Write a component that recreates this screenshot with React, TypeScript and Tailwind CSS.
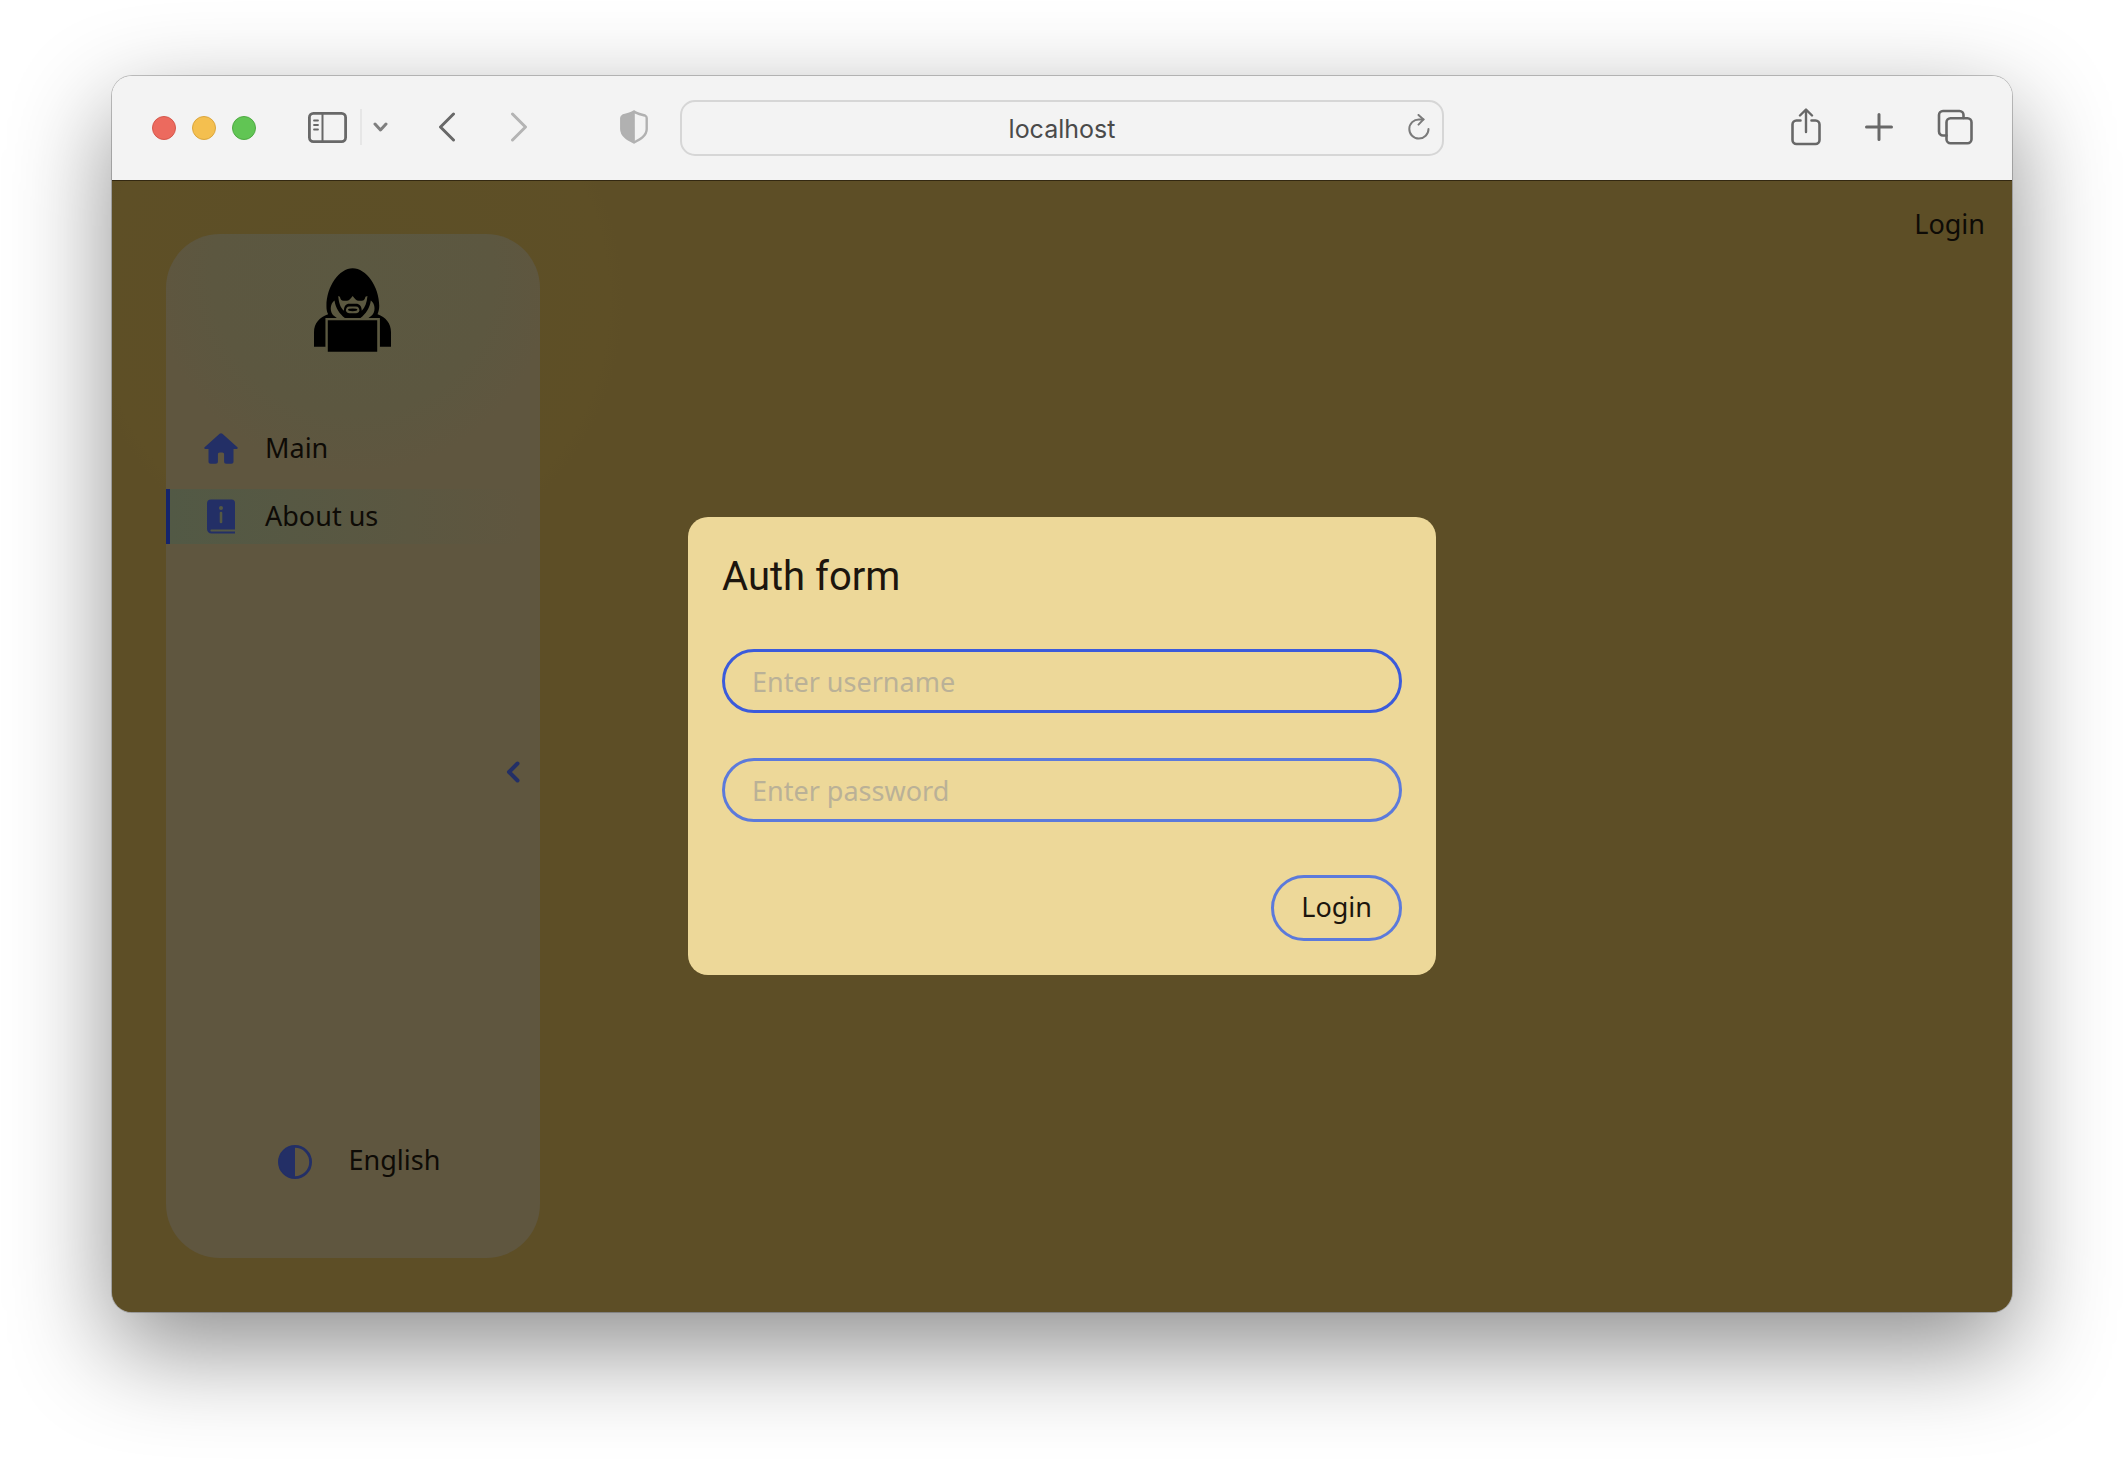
import React from "react";

function TrafficLights() {
  return (
    <div className="flex gap-4">
      <span className="size-6 rounded-full border border-[#d5584c] bg-[#ec6a5e]" />
      <span className="size-6 rounded-full border border-[#dba63d] bg-[#f4bf4f]" />
      <span className="size-6 rounded-full border border-[#4faa43] bg-[#61c554]" />
    </div>
  );
}

const line = {
  fill: "none",
  stroke: "currentColor",
  strokeLinecap: "round" as const,
  strokeLinejoin: "round" as const,
};

function BrowserBar() {
  return (
    <header className="grid h-[104px] shrink-0 grid-cols-[29fr_42fr_29fr] items-center bg-[#f3f3f3] px-10 text-[#686868]">
      <div className="flex items-center">
        <TrafficLights />
        <div className="flex flex-1 items-center pb-0.5">
          <button aria-label="Show sidebar" className="ml-[52px]">
            <svg width="39" height="31" viewBox="0 0 39 31" {...line} strokeWidth="2.800">
              <rect x="1.400" y="1.400" width="36.200" height="28.200" rx="4" />
              <path d="M14.500 1.500v28" strokeWidth="2" />
              <path d="M6 8.500h4M6 13h4M6 17.500h4" strokeWidth="1.800" />
            </svg>
          </button>
          <span className="ml-[13px] h-9 w-0.5 bg-[#e6e6e6]" />
          <button aria-label="Tab groups" className="ml-[11px] text-[#7f7f7f]">
            <svg width="15" height="10" viewBox="0 0 15 10" {...line} strokeWidth="3">
              <path d="M2 2l5.500 6L13 2" />
            </svg>
          </button>
          <button aria-label="Back" className="ml-[50px]">
            <svg width="18" height="30" viewBox="0 0 18 30" {...line} strokeWidth="3">
              <path d="M15.500 2L2.500 15l13 13" />
            </svg>
          </button>
          <button aria-label="Forward" className="ml-[54px] text-[#b4b4b4]">
            <svg width="18" height="30" viewBox="0 0 18 30" {...line} strokeWidth="3">
              <path d="M2.500 2l13 13-13 13" />
            </svg>
          </button>
          <button aria-label="Privacy report" className="mr-8 ml-auto text-[#b1b1b1]">
            <svg width="28" height="34" viewBox="0 0 28 34" {...line} strokeWidth="2.400">
              <path d="M14 1.500C11 4 6 4.500 3 5.500 1.800 6 1.300 6.500 1.300 8v11c0 7 7 10.500 12.700 13.500C19.700 29.500 26.700 26 26.700 19V8c0-1.500-.5-2-1.700-2.500C22 4.500 17 4 14 1.500z" />
              <path d="M14 1.500C11 4 6 4.500 3 5.500 1.800 6 1.300 6.500 1.300 8v11c0 7 7 10.500 12.700 13.500z" fill="currentColor" strokeWidth="1" />
            </svg>
          </button>
        </div>
      </div>

      <div className="grid h-14 grid-cols-[1fr_auto_1fr] items-center rounded-[15px] border-2 border-[#d6d6d6] px-3">
        <button className="col-start-2 pt-0.5 font-[Inter,sans-serif] text-[25px] leading-8 text-[#4a4a4a]">
          localhost
        </button>
        <button aria-label="Reload" className="justify-self-end pb-0.5 text-[#7b7b7b]">
          <svg width="22" height="26" viewBox="0 0 22 26" {...line} strokeWidth="2">
            <path d="M20.500 15a9.600 9.600 0 1 1-9.500-9.600h4.500" />
            <path d="M10.500 1l5 4.400-5 5.200" />
          </svg>
        </button>
      </div>

      <div className="-mr-px flex items-center justify-end gap-11 pb-0.5">
        <button aria-label="Share">
          <svg width="30" height="38" viewBox="0 0 30 38" {...line} strokeWidth="2.600">
            <path d="M9.500 12.500H5.500a4 4 0 0 0-4 4V32a4 4 0 0 0 4 4h19a4 4 0 0 0 4-4V16.500a4 4 0 0 0-4-4h-4" />
            <path d="M15 24V2M9 7.500L15 1.500l6 6" strokeWidth="2.400" />
          </svg>
        </button>
        <button aria-label="New tab">
          <svg width="28" height="28" viewBox="0 0 28 28" {...line} strokeWidth="3">
            <path d="M14 1.500v25M1.500 14h25" />
          </svg>
        </button>
        <button aria-label="Tab overview">
          <svg width="36" height="36" viewBox="0 0 36 36" {...line} strokeWidth="2.600">
            <rect x="9.500" y="9.300" width="25" height="25" rx="4" />
            <path d="M9.500 26.500H6a4 4 0 0 1-4-4V6a4 4 0 0 1 4-4h16.500a4 4 0 0 1 4 4v3" />
          </svg>
        </button>
      </div>
    </header>
  );
}

function HackerLogo() {
  return (
    <svg width="77" height="84" viewBox="73 56 229 249" role="img" aria-label="Hooded figure with a laptop">
      <path d="M188 56c-40 0-78 54-78 112 0 10 1 18 5 25-25 9-42 26-42 54v43h229v-43c0-28-16-45-40-54 3-7 5-15 5-25 0-58-39-112-79-112z" />
      <g fill="#5b5840">
        <path d="M134 152c-14 10-16 36 1 48l6 4h24c-16-12-28-30-31-52zM242 152c14 10 16 36-1 48l-6 4h-24c16-12 28-30 31-52z" />
        <path d="M145 139c2 20 6 34 17 44 0-14 6-21 16-21h20c10 0 17 7 17 21 10-10 15-24 17-44l-6 2c-2 8-4 12-11 12h-9c-7 0-11-5-18-14-7 9-11 14-18 14h-9c-7 0-9-4-11-12z" />
        <path d="M178 170h20c7 0 10 6 10 12-1 5-5 8-10 8h-20c-5 0-9-3-10-8 0-6 3-12 10-12z" />
        <path d="M107 204h162v101H107z" />
      </g>
      <ellipse cx="188" cy="180" rx="14" ry="4" />
      <path d="M114 211h147v94H114z" />
    </svg>
  );
}

function HomeIcon() {
  return (
    <svg width="34" height="32" viewBox="0 0 34 32" fill="currentColor" aria-hidden="true">
      <path d="M15.600.8a2.200 2.200 0 0 1 2.800 0l15 13.400c.8.800.4 1.700-.6 1.700H29.500V28.600c0 1.400-.8 2.200-2.200 2.200h-5c-1.400 0-2.200-.8-2.200-2.200v-7.200c0-1.200-.7-1.900-1.900-1.900h-2.400c-1.200 0-1.900.7-1.900 1.900v7.200c0 1.400-.8 2.200-2.200 2.200h-5c-1.400 0-2.200-.8-2.200-2.200V15.900H1.200c-1 0-1.400-.9-.6-1.700z" />
    </svg>
  );
}

function InfoBookIcon() {
  return (
    <svg width="34" height="35" viewBox="0 0 34 35" aria-hidden="true">
      <path fill="currentColor" d="M7 .5h20.500A3.500 3.500 0 0 1 31 4v26.500H7.500c-1.500 0-1.500 2 0 2H31v2H7.500A4.500 4.500 0 0 1 3 30V4.500a4 4 0 0 1 4-4z" />
      <circle cx="17" cy="9" r="2" fill="#555843" />
      <path d="M17 14v9" stroke="#555843" strokeWidth="2.600" strokeLinecap="round" />
    </svg>
  );
}

function ContrastIcon() {
  return (
    <svg width="34" height="34" viewBox="0 0 34 34" aria-hidden="true">
      <circle cx="17" cy="17" r="15.600" fill="none" stroke="currentColor" strokeWidth="2.800" />
      <path fill="currentColor" d="M17 1a16 16 0 0 0 0 32z" />
    </svg>
  );
}

const links = [
  { label: "Main", Icon: HomeIcon, active: false },
  { label: "About us", Icon: InfoBookIcon, active: true },
];

function Sidebar() {
  return (
    <aside className="flex w-[374px] flex-col rounded-[54px] bg-[#5f563f] bg-[radial-gradient(circle_at_50%_40px,#5b5841_0px,#5c5740_140px,#5f563f_200px)] pt-[34px] pb-[76px]">
      <div className="flex justify-center pr-0.5">
        <HackerLogo />
      </div>
      <nav className="mt-[69px] flex flex-col gap-[13px]">
        {links.map(({ label, Icon, active }) => (
          <a
            key={label}
            href="#"
            className={
              active
                ? "flex h-[55px] items-center gap-[27px] border-l-4 border-[#15246c] bg-linear-to-r from-[#525945] to-[#5f563f] to-95% pl-[34px] leading-9"
                : "flex h-[55px] items-center gap-[27px] border-l-4 border-transparent pl-[34px] leading-9"
            }
          >
            <span className="text-[#232f66]">
              <Icon />
            </span>
            <span className="pb-0.5">{label}</span>
          </a>
        ))}
      </nav>
      <div className="flex flex-1 items-center justify-end pr-5 pb-[142px]">
        <button aria-label="Collapse sidebar" className="text-[#232f66]">
          <svg width="14" height="22" viewBox="0 0 14 22" {...line} strokeWidth="4">
            <path d="M11.500 2.500L3 11l8.500 8.500" />
          </svg>
        </button>
      </div>
      <div className="flex items-center justify-center gap-[37px] pl-3">
        <button aria-label="Switch theme" className="text-[#232f66]">
          <ContrastIcon />
        </button>
        <button className="pb-1 leading-9">English</button>
      </div>
    </aside>
  );
}

function AuthForm() {
  return (
    <form
      aria-labelledby="auth-title"
      className="flex w-[748px] flex-col rounded-[20px] bg-[#edd899] p-[34px] text-[#1c150d]"
    >
      <h1 id="auth-title" className="font-[Roboto,sans-serif] text-[40px] leading-[52px]">
        Auth form
      </h1>
      <input
        aria-label="Username"
        placeholder="Enter username"
        className="mt-[46px] h-16 rounded-full border-3 border-[#3b5bdb] px-[27px] outline-none placeholder:text-[#bab197]"
      />
      <input
        type="password"
        aria-label="Password"
        placeholder="Enter password"
        className="mt-[45px] h-16 rounded-full border-3 border-[#5c7adb] px-[27px] outline-none placeholder:text-[#bab197]"
      />
      <button
        type="button"
        className="mt-[53px] h-[66px] self-end rounded-full border-3 border-[#5c7adb] px-[27px] pb-0.5 leading-9"
      >
        Login
      </button>
    </form>
  );
}

export default function App() {
  return (
    <div className="flex min-h-screen bg-white px-28 pt-[76px] pb-[148px] font-['Noto_Sans',sans-serif] text-[27px] text-[#0e0b06]">
      <div className="flex flex-1 flex-col overflow-hidden rounded-[20px] shadow-[0_0_0_1px_rgba(0,0,0,0.22),0_36px_100px_rgba(0,0,0,0.45)]">
        <BrowserBar />
        <main className="relative flex flex-1 items-start bg-[#5d4e26] bg-[radial-gradient(circle_at_242px_120px,#5c4f27_0px,#5e4f26_255px,#5d4e26_270px)] shadow-[inset_0_1px_0_#332811]">
          <div className="flex self-stretch py-[54px] pl-[54px]">
            <Sidebar />
          </div>
          <button className="mt-[26px] mr-[27px] ml-auto leading-9">Login</button>
          <div className="absolute inset-0 flex items-center justify-center">
            <AuthForm />
          </div>
        </main>
      </div>
    </div>
  );
}
